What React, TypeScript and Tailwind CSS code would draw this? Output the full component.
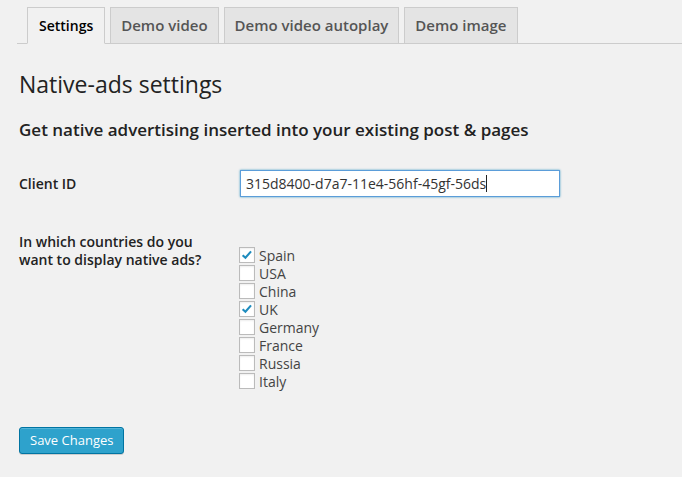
const tabs = ['Settings', 'Demo video', 'Demo video autoplay', 'Demo image'];

const countries = [
  { name: 'Spain', checked: true },
  { name: 'USA', checked: false },
  { name: 'China', checked: false },
  { name: 'UK', checked: true },
  { name: 'Germany', checked: false },
  { name: 'France', checked: false },
  { name: 'Russia', checked: false },
  { name: 'Italy', checked: false },
];

function Checkbox({ checked }: { checked: boolean }) {
  return (
    <span className="w-4 h-4 shrink-0 border border-[#bbb] bg-white shadow-[inset_0_1px_2px_rgba(0,0,0,0.07)] flex items-center justify-center">
      {checked && (
        <svg viewBox="0 0 16 16" className="w-[14px] h-[14px]">
          <path d="M3 8.2 L6.2 11.2 L12.6 3.8" fill="none" stroke="#1e8cbe" strokeWidth="2.4" strokeLinejoin="miter" />
        </svg>
      )}
    </span>
  );
}

export default function App() {
  return (
    <div className="w-[682px] h-[477px] bg-[#f1f1f1] text-[#444] overflow-hidden" style={{ fontFamily: '"Open Sans", sans-serif' }}>
      {/* Tabs */}
      <div className="pt-[7px] pl-[17px]">
        <div className="flex items-end border-b border-[#ccc] pl-[10px] h-[37px]">
          {tabs.map((tab, i) => (
            <div
              key={tab}
              className={
                i === 0
                  ? 'h-[37px] -mb-px mr-[5px] px-[11px] border border-[#ccc] border-b-[#f1f1f1] bg-[#f1f1f1] text-black text-[14px] font-semibold leading-[35px]'
                  : 'h-[37px] -mb-px mr-[5px] px-[10px] border border-[#ccc] bg-[#e4e4e4] text-[#555] text-[15px] font-semibold leading-[35px]'
              }
            >
              {tab}
            </div>
          ))}
        </div>
      </div>

      <div className="pl-[19px]">
        <h2 className="text-[23px] font-normal text-[#222] leading-[29px] mt-[26px]">Native-ads settings</h2>
        <h3 className="text-[17px] font-semibold text-[#222] mt-[20px] leading-[22px]">
          Get native advertising inserted into your existing post &amp; pages
        </h3>

        {/* Client ID */}
        <div className="flex mt-[29px] items-center">
          <div className="w-[221px] text-[14px] font-semibold text-[#222]">Client ID</div>
          <div className="w-[320px] h-[27px] bg-white border border-[#5b9dd9] shadow-[0_0_2px_rgba(30,140,190,0.8)] px-[5px] flex items-center text-[14px] text-[#333]">
            315d8400-d7a7-11e4-56hf-45gf-56ds
            <span className="w-px h-[17px] bg-[#222]" />
          </div>
        </div>

        {/* Countries */}
        <div className="flex mt-[36px]">
          <div className="w-[220px] text-[14px] font-semibold text-[#222] leading-[18px]">
            In which countries do you
            <br />
            want to display native ads?
          </div>
          <div className="flex flex-col mt-[13px]">
            {countries.map((c) => (
              <label key={c.name} className="flex items-center gap-[4px] h-[18px] text-[14px] text-[#444]">
                <Checkbox checked={c.checked} />
                {c.name}
              </label>
            ))}
          </div>
        </div>

        <button className="mt-[37px] h-[27px] px-[10px] bg-[#2ea2cc] border border-[#0074a2] rounded-[3px] text-white text-[13px] leading-[25px] shadow-[inset_0_1px_0_rgba(120,200,230,0.5),0_1px_0_rgba(0,0,0,0.15)]">
          Save Changes
        </button>
      </div>
    </div>
  );
}
